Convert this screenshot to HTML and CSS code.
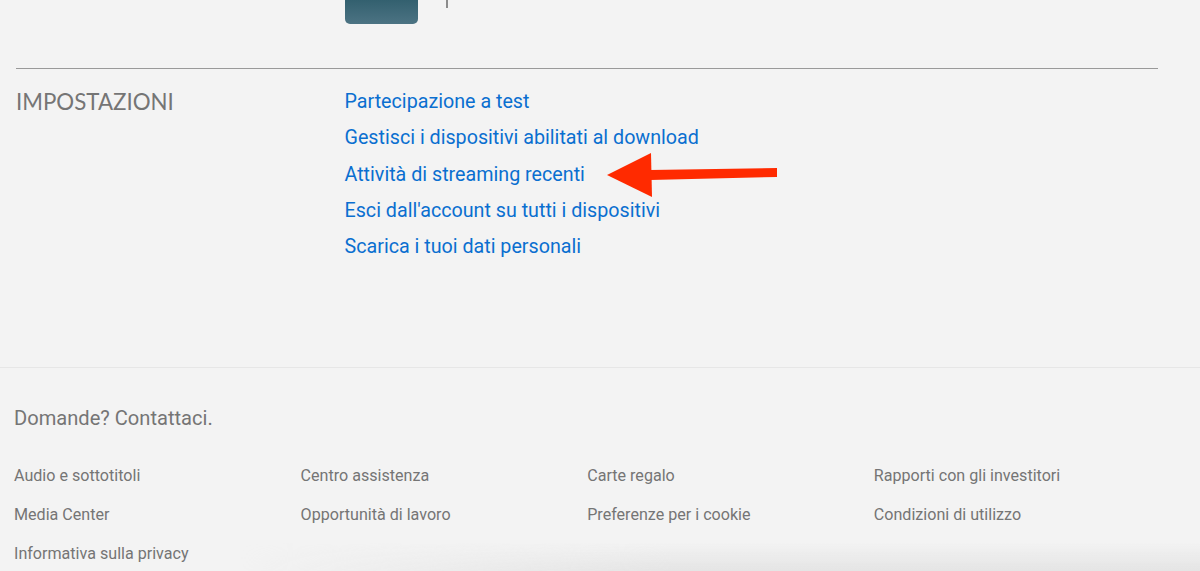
FILE: index.html
```html
<!DOCTYPE html>
<html lang="it">
<head>
    <meta charset="UTF-8">
    <meta name="viewport" content="width=device-width, initial-scale=1.0">
    <title>Account</title>
    <link rel="stylesheet" href="styles.css">
</head>
<body>
    <div class="account">
        <div class="profilo">
            <div class="miniatura"></div>
            <div class="tacca"></div>
        </div>
        <section class="impostazioni">
            <h2>IMPOSTAZIONI</h2>
            <div class="link-lista">
                <a href="#">Partecipazione a test</a>
                <a href="#">Gestisci i dispositivi abilitati al download</a>
                <a href="#">Attività di streaming recenti</a>
                <a href="#">Esci dall'account su tutti i dispositivi</a>
                <a href="#">Scarica i tuoi dati personali</a>
            </div>
        </section>
    </div>

    <svg class="freccia" width="180" height="50" viewBox="0 0 180 50">
        <polygon points="1,22 45,0 46,44" fill="#ff2a00"/>
        <polygon points="44,17 171,15 171,24 44,27" fill="#ff2a00"/>
    </svg>

    <footer class="piede">
        <p class="contatti">Domande? Contattaci.</p>
        <div class="piede-griglia">
            <a href="#">Audio e sottotitoli</a>
            <a href="#">Centro assistenza</a>
            <a href="#">Carte regalo</a>
            <a href="#">Rapporti con gli investitori</a>
            <a href="#">Media Center</a>
            <a href="#">Opportunità di lavoro</a>
            <a href="#">Preferenze per i cookie</a>
            <a href="#">Condizioni di utilizzo</a>
            <a href="#">Informativa sulla privacy</a>
        </div>
    </footer>

    <div class="ombra"></div>
</body>
</html>
```

FILE: styles.css
```css
* {
    margin: 0;
    padding: 0;
    box-sizing: border-box;
}
html, body {
    height: 100%;
}
body {
    background-color: #f3f3f3;
    font-family: Roboto, "Liberation Sans", sans-serif;
    position: relative;
    overflow: hidden;
}
a {
    text-decoration: none;
}
.account {
    height: 367px;
    padding: 0 42px 0 16px;
}
.profilo {
    display: flex;
    height: 68px;
    padding-left: 328.5px;
    align-items: flex-start;
}
.miniatura {
    width: 73px;
    height: 24px;
    background: linear-gradient(to bottom, #33606f, #4c7383);
    border-radius: 0 0 5px 5px;
}
.tacca {
    width: 2px;
    height: 8px;
    background-color: #8c8c8c;
    margin-left: 28px;
}
.impostazioni {
    display: flex;
    border-top: 1px solid #999;
    padding-top: 15px;
}
.impostazioni h2 {
    width: 328.5px;
    font-family: Lato, sans-serif;
    font-size: 22.3px;
    font-weight: 400;
    line-height: 36px;
    color: #757575;
}
.link-lista {
    display: flex;
    flex-direction: column;
}
.link-lista a {
    font-size: 19.7px;
    line-height: 36.3px;
    color: #0a6fd0;
}
.freccia {
    position: absolute;
    left: 606px;
    top: 153px;
}
.piede {
    border-top: 1px solid #e6e6e6;
    padding: 39px 0 0 14px;
    color: #757575;
}
.contatti {
    font-size: 20.1px;
    line-height: 22px;
    margin-bottom: 37px;
}
.piede-griglia {
    display: grid;
    grid-template-columns: repeat(4, 286.6px);
    grid-auto-rows: 38.9px;
}
.piede-griglia a {
    font-size: 16.1px;
    line-height: 20px;
    color: #757575;
}
.ombra {
    position: absolute;
    left: 240px;
    right: 0;
    bottom: 0;
    height: 28px;
    background: linear-gradient(to bottom, rgba(232, 232, 232, 0), #e4e4e4);
    -webkit-mask-image: linear-gradient(to right, transparent, #000 45%);
    mask-image: linear-gradient(to right, transparent, #000 45%);
}
```
